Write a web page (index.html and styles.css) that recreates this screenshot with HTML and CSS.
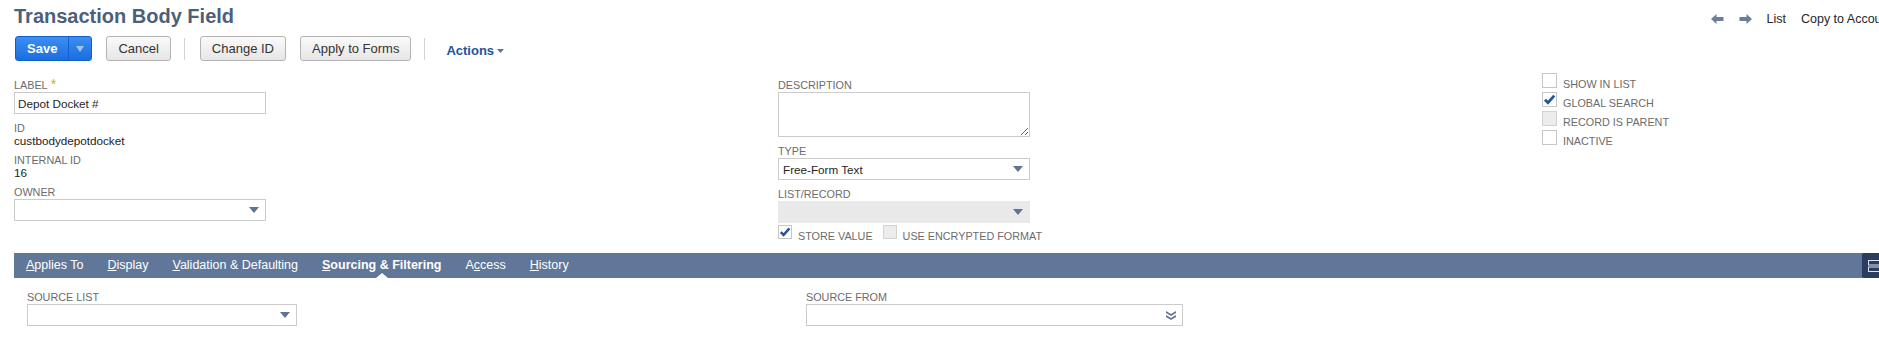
FILE: index.html
```html
<!DOCTYPE html>
<html lang="en">
<head>
    <meta charset="UTF-8">
    <meta name="viewport" content="width=device-width, initial-scale=1.0">
    <title>Transaction Body Field</title>
    <link rel="stylesheet" href="styles.css">
</head>
<body>
    <div class="page">
        <div class="page-header">
            <div class="title-area">
                <h1 class="page-title">Transaction Body Field</h1>
                <div class="toolbar">
                    <div class="btn-split">
                        <button class="btn-primary">Save</button>
                        <button class="btn-primary-menu">
                            <svg width="8" height="6" viewBox="0 0 8 6"><polygon points="0,0 8,0 4,6" fill="#a3c4f2"/></svg>
                        </button>
                    </div>
                    <button class="btn">Cancel</button>
                    <span class="toolbar-sep"></span>
                    <button class="btn">Change ID</button>
                    <button class="btn">Apply to Forms</button>
                    <span class="toolbar-sep"></span>
                    <a class="actions-menu">Actions<svg width="7" height="4" viewBox="0 0 7 4"><polygon points="0,0 7,0 3.5,4" fill="#5f7394"/></svg></a>
                </div>
            </div>
            <div class="record-nav">
                <svg class="nav-arrow" width="13" height="10" viewBox="0 0 13 10"><path d="M0 5 L5.5 0 V3 H12.5 V7 H5.5 V10 Z" fill="#6b7f9d"/></svg>
                <svg class="nav-arrow" width="13" height="10" viewBox="0 0 13 10"><path d="M13 5 L7.5 0 V3 H0.5 V7 H7.5 V10 Z" fill="#6b7f9d"/></svg>
                <a class="nav-link">List</a>
                <a class="nav-link">Copy to Account</a>
            </div>
        </div>

        <div class="main-fields">
            <div class="field-col">
                <div class="field">
                    <div class="field-label">Label<span class="required">*</span></div>
                    <input class="text-input" type="text" value="Depot Docket #">
                </div>
                <div class="field">
                    <div class="field-label">ID</div>
                    <div class="field-value">custbodydepotdocket</div>
                </div>
                <div class="field">
                    <div class="field-label">Internal ID</div>
                    <div class="field-value">16</div>
                </div>
                <div class="field">
                    <div class="field-label">Owner</div>
                    <div class="select">
                        <span class="select-text"></span>
                        <svg width="10" height="6" viewBox="0 0 10 6"><polygon points="0,0 10,0 5,6" fill="#5f7394"/></svg>
                    </div>
                </div>
            </div>

            <div class="field-col">
                <div class="field">
                    <div class="field-label">Description</div>
                    <textarea class="textarea"></textarea>
                </div>
                <div class="field">
                    <div class="field-label">Type</div>
                    <div class="select">
                        <span class="select-text">Free-Form Text</span>
                        <svg width="10" height="6" viewBox="0 0 10 6"><polygon points="0,0 10,0 5,6" fill="#5f7394"/></svg>
                    </div>
                </div>
                <div class="field field-last">
                    <div class="field-label">List/Record</div>
                    <div class="select select-disabled">
                        <span class="select-text"></span>
                        <svg width="10" height="6" viewBox="0 0 10 6"><polygon points="0,0 10,0 5,6" fill="#5f7394"/></svg>
                    </div>
                </div>
                <div class="inline-checks">
                    <div class="check check-small">
                        <span class="check-box">
                            <svg width="12" height="12" viewBox="0 0 12 12"><path d="M1.8 6.2 L4.6 9 L10.4 2.4" stroke="#24539a" stroke-width="2.5" fill="none"/></svg>
                        </span>
                        <span class="check-label">Store Value</span>
                    </div>
                    <div class="check check-small">
                        <span class="check-box check-disabled"></span>
                        <span class="check-label">Use Encrypted Format</span>
                    </div>
                </div>
            </div>

            <div class="check-col">
                <div class="check">
                    <span class="check-box"></span>
                    <span class="check-label">Show in List</span>
                </div>
                <div class="check">
                    <span class="check-box">
                        <svg width="13" height="13" viewBox="0 0 12 12"><path d="M1.8 6.2 L4.6 9 L10.4 2.4" stroke="#24539a" stroke-width="2.5" fill="none"/></svg>
                    </span>
                    <span class="check-label">Global Search</span>
                </div>
                <div class="check">
                    <span class="check-box check-disabled"></span>
                    <span class="check-label">Record is Parent</span>
                </div>
                <div class="check">
                    <span class="check-box"></span>
                    <span class="check-label">Inactive</span>
                </div>
            </div>
        </div>

        <div class="subtabs">
            <a class="subtab"><u>A</u>pplies To</a>
            <a class="subtab"><u>D</u>isplay</a>
            <a class="subtab"><u>V</u>alidation &amp; Defaulting</a>
            <a class="subtab subtab-active"><u>S</u>ourcing &amp; Filtering</a>
            <a class="subtab">A<u>c</u>cess</a>
            <a class="subtab"><u>H</u>istory</a>
            <span class="subtab-toggle">
                <svg width="14" height="12" viewBox="0 0 14 12"><rect x="0.5" y="0.5" width="13" height="4.5" fill="none" stroke="#dfe6f1"/><rect x="0.5" y="7" width="13" height="4.5" fill="none" stroke="#dfe6f1"/></svg>
            </span>
        </div>

        <div class="subtab-body">
            <div class="field">
                <div class="field-label">Source List</div>
                <div class="select source-list">
                    <span class="select-text"></span>
                    <svg width="10" height="6" viewBox="0 0 10 6"><polygon points="0,0 10,0 5,6" fill="#5f7394"/></svg>
                </div>
            </div>
            <div class="field">
                <div class="field-label">Source From</div>
                <div class="select source-from">
                    <span class="select-text"></span>
                    <svg width="10" height="9" viewBox="0 0 10 9"><path d="M0 0 L5 3 L10 0 V2 L5 5 L0 2 Z M0 4 L5 7 L10 4 V6 L5 9 L0 6 Z" fill="#5f7394"/></svg>
                </div>
            </div>
        </div>
    </div>
</body>
</html>
```

FILE: styles.css
```css
html, body {
    margin: 0;
    padding: 0;
    overflow: hidden;
    background-color: #fff;
}
body {
    font-family: "Liberation Sans", Arial, Helvetica, sans-serif;
    color: #262626;
}
.page {
    width: 1906px;
    box-sizing: border-box;
    padding: 0 14px;
}

/* header */
.page-header {
    display: flex;
    justify-content: space-between;
    align-items: flex-start;
}
.page-title {
    margin: 0;
    padding-top: 5px;
    font-size: 20px;
    line-height: 23px;
    font-weight: bold;
    color: #4d5f79;
}
.toolbar {
    display: flex;
    align-items: center;
    margin-top: 8px;
    padding-left: 1px;
    height: 25px;
}
.btn-split {
    display: flex;
    height: 25px;
    border: 1px solid #135fc8;
    border-radius: 3px;
    box-sizing: border-box;
    overflow: hidden;
    background: linear-gradient(#3b8ef3, #1a6ee0);
}
.btn-primary,
.btn-primary-menu {
    border: none;
    background: transparent;
    color: #fff;
    font-family: inherit;
    font-size: 13px;
    font-weight: bold;
    padding: 0 11px;
    height: 23px;
    cursor: pointer;
}
.btn-primary-menu {
    width: 23px;
    padding: 0;
    border-left: 1px solid #135fc8;
    display: flex;
    align-items: center;
    justify-content: center;
}
.btn {
    height: 25px;
    margin-left: 14px;
    padding: 0 11px;
    border: 1px solid #b4b4b4;
    border-radius: 3px;
    background: linear-gradient(#fafafa, #e6e6e6);
    font-family: inherit;
    font-size: 13px;
    color: #333;
    cursor: pointer;
}
.toolbar-sep {
    width: 1px;
    height: 22px;
    background-color: #d3d3d3;
    margin: 0 15px 0 13px;
}
.toolbar-sep + .btn {
    margin-left: 0;
}
.actions-menu {
    margin-left: 6px;
    padding-top: 4px;
    font-size: 13px;
    font-weight: bold;
    color: #24539a;
    cursor: pointer;
}
.actions-menu svg {
    margin-left: 3px;
    vertical-align: 2px;
}
.record-nav {
    display: flex;
    align-items: center;
    gap: 15px;
    padding-top: 7px;
    height: 23px;
}
.nav-link {
    font-size: 12.5px;
    color: #262626;
    white-space: nowrap;
}

/* main fields */
.main-fields {
    display: grid;
    grid-template-columns: 764px 764px 1fr;
    margin-top: 12px;
}
.field-col {
    padding-top: 6px;
}
.field {
    margin-bottom: 8px;
}
.field-last {
    margin-bottom: 0;
}
.field-label {
    font-size: 10.8px;
    line-height: 13px;
    color: #6b6b6b;
    text-transform: uppercase;
}
.required {
    font-size: 14px;
    line-height: 0;
    color: #e2a231;
    margin-left: 3px;
}
.field-value {
    font-size: 11.7px;
    line-height: 11px;
    color: #222;
}
.text-input {
    display: block;
    width: 252px;
    height: 22px;
    margin: 0;
    box-sizing: border-box;
    border: 1px solid #cbcbcb;
    padding: 0 3px;
    font-family: inherit;
    font-size: 11.7px;
    color: #262626;
    outline: none;
}
.textarea {
    display: block;
    width: 252px;
    height: 45px;
    margin: 0;
    box-sizing: border-box;
    border: 1px solid #cbcbcb;
    font-family: inherit;
    font-size: 11.7px;
    outline: none;
}
.select {
    display: flex;
    align-items: center;
    justify-content: space-between;
    width: 252px;
    height: 22px;
    box-sizing: border-box;
    border: 1px solid #cbcbcb;
    padding: 0 6px 0 4px;
    background-color: #fff;
}
.select-text {
    font-size: 11.7px;
    color: #262626;
}
.select-disabled {
    background-color: #e9e9e9;
    border-color: #e9e9e9;
}

/* checkboxes */
.inline-checks {
    display: flex;
    margin-top: 2px;
}
.check {
    display: flex;
    align-items: flex-start;
    height: 19px;
}
.check-box {
    width: 15px;
    height: 15px;
    box-sizing: border-box;
    border: 1px solid #c6c6c6;
    background-color: #fff;
    display: flex;
    align-items: center;
    justify-content: center;
}
.check-small .check-box {
    width: 14px;
    height: 14px;
}
.check-small + .check-small {
    margin-left: 10px;
}
.check-disabled {
    background-color: #ececec;
    border-color: #d2d2d2;
}
.check-label {
    padding-top: 4px;
    margin-left: 6px;
    font-size: 10.8px;
    line-height: 14px;
    color: #6b6b6b;
    text-transform: uppercase;
}
.check-small .check-label {
    margin-left: 6px;
}

/* subtabs */
.subtabs {
    display: flex;
    align-items: stretch;
    height: 25px;
    margin-top: 9px;
    background-color: #607799;
}
.subtab {
    position: relative;
    padding: 0 12px;
    font-size: 12.5px;
    line-height: 25px;
    color: #fff;
    white-space: nowrap;
    cursor: pointer;
}
.subtab-active {
    font-weight: bold;
}
.subtab-active::after {
    content: "";
    position: absolute;
    left: 50%;
    bottom: 0;
    margin-left: -6px;
    border-left: 6px solid transparent;
    border-right: 6px solid transparent;
    border-bottom: 5px solid #fff;
}
.subtab-toggle {
    margin-left: auto;
    margin-right: 5px;
    width: 25px;
    background-color: #2b3c5f;
    border-radius: 2px 0 0 2px;
    display: flex;
    align-items: center;
    justify-content: center;
}
.subtab-body {
    display: grid;
    grid-template-columns: 779px 1fr;
    padding: 13px 0 0 13px;
}
.source-list {
    width: 270px;
}
.source-from {
    width: 377px;
}
```
